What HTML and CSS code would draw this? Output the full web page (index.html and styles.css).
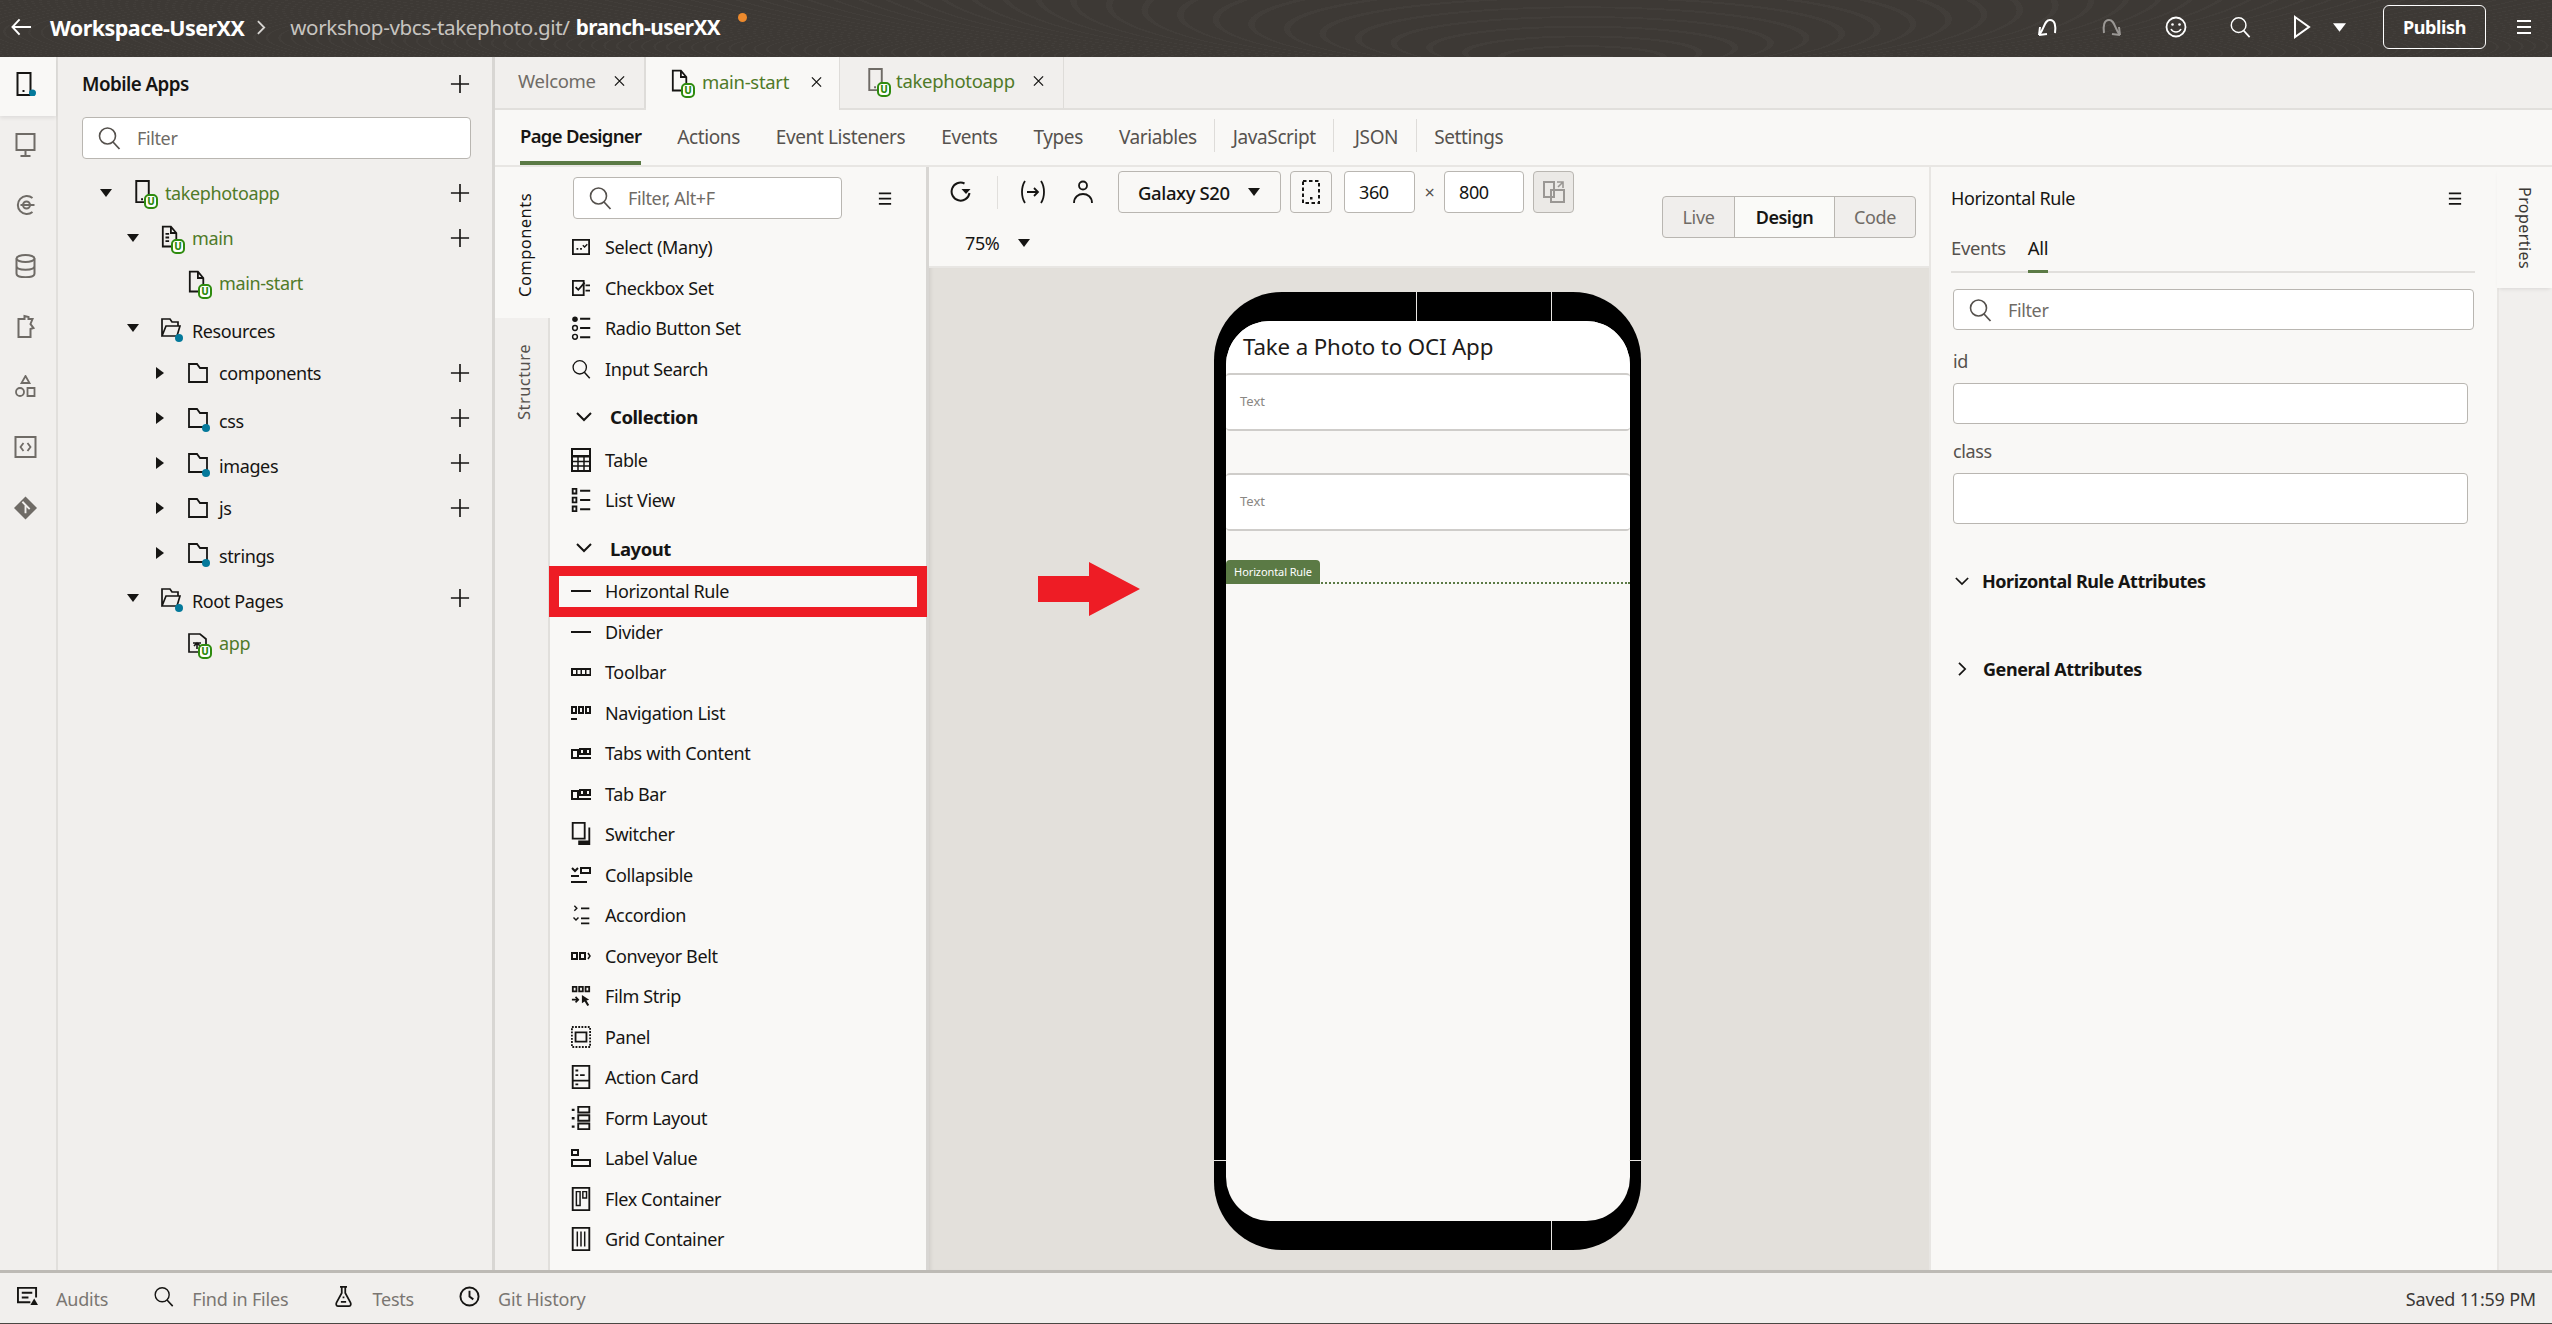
FILE: index.html
```html
<!DOCTYPE html>
<html lang="en">
<head>
<meta charset="utf-8">
<title>Workspace-UserXX</title>
<link rel="stylesheet" href="styles.css">
</head>
<body>
<svg class="defs" width="0" height="0" aria-hidden="true">
  <defs>
    <symbol id="search" viewBox="0 0 24 24"><circle cx="10.5" cy="10" r="8" fill="none" stroke="currentColor" stroke-width="1.6"/><path d="M16 16l6.5 7" fill="none" stroke="currentColor" stroke-width="1.8"/></symbol>
    <symbol id="plus" viewBox="0 0 22 22"><path d="M11 1v20M1 11h20" stroke="currentColor" stroke-width="1.8" fill="none"/></symbol>
    <symbol id="menu" viewBox="0 0 16 16"><path d="M1 2h14M1 8h14M1 14h14" stroke="currentColor" stroke-width="2" fill="none"/></symbol>
    <symbol id="down" viewBox="0 0 12 8"><path d="M0 0h12L6 8z" fill="currentColor"/></symbol>
    <symbol id="right" viewBox="0 0 8 12"><path d="M0 0v12l8-6z" fill="currentColor"/></symbol>
    <symbol id="chev" viewBox="0 0 16 10"><path d="M1 1l7 7 7-7" stroke="currentColor" stroke-width="2" fill="none"/></symbol>
    <symbol id="chevr" viewBox="0 0 10 16"><path d="M1 1l7 7-7 7" stroke="currentColor" stroke-width="2" fill="none"/></symbol>
    <symbol id="close" viewBox="0 0 12 12"><path d="M1 1l10 10M11 1L1 11" stroke="currentColor" stroke-width="1.4" fill="none"/></symbol>
    <symbol id="mobile" viewBox="0 0 18 26"><path d="M2 1h13v22H2z" fill="none" stroke="currentColor" stroke-width="2"/><path d="M7 19h2v2H7z" fill="currentColor"/></symbol>
    <symbol id="page" viewBox="0 0 20 26"><path d="M2 1h9l6 7v15H2z M11 1v7h6" fill="none" stroke="currentColor" stroke-width="2"/></symbol>
    <symbol id="flow" viewBox="0 0 20 26"><path d="M2 1h9l6 7v15H2z M11 1v7h6" fill="none" stroke="currentColor" stroke-width="2"/><path d="M5 9h4M5 13h4M5 17h4" stroke="currentColor" stroke-width="2"/></symbol>
    <symbol id="rootpage" viewBox="0 0 20 20"><path d="M1 1h11l6 5v13H1z" fill="none" stroke="currentColor" stroke-width="1.7"/><path d="M5 10h8M9 16v-5m-3 2l3-3 3 3" stroke="currentColor" stroke-width="1.6" fill="none"/></symbol>
    <symbol id="folder" viewBox="0 0 20 20"><path d="M1 1h8l3 4h7v14H1z" fill="none" stroke="currentColor" stroke-width="1.8"/></symbol>
    <symbol id="folderopen" viewBox="0 0 20 20"><path d="M1 18V1h8l2 3h6v4M1 18l4-10h14l-3 10z" fill="none" stroke="currentColor" stroke-width="1.7"/></symbol>
    <symbol id="select" viewBox="0 0 20 20"><path d="M1 2h18v16H1z" fill="none" stroke="currentColor" stroke-width="2"/><path d="M5 11h2v2H5zM9 11h2v2H9z" fill="currentColor"/><path d="M12 8l2 2 3-3" fill="none" stroke="currentColor" stroke-width="1.5"/></symbol>
    <symbol id="checkset" viewBox="0 0 20 20"><path d="M1 2h12v16H1z" fill="none" stroke="currentColor" stroke-width="2"/><path d="M4 9l3 3 7-8" fill="none" stroke="currentColor" stroke-width="2"/><path d="M15 7h5M15 13h5" stroke="currentColor" stroke-width="2"/></symbol>
    <symbol id="radio" viewBox="0 0 20 26"><circle cx="3.5" cy="3.5" r="3" fill="currentColor"/><circle cx="3.5" cy="13" r="2.6" fill="none" stroke="currentColor" stroke-width="1.6"/><circle cx="3.5" cy="22.5" r="2.6" fill="none" stroke="currentColor" stroke-width="1.6"/><path d="M9 3h11M9 13h11M9 23h11" stroke="currentColor" stroke-width="2"/></symbol>
    <symbol id="table" viewBox="0 0 20 24"><path d="M1 1h18v22H1z" fill="none" stroke="currentColor" stroke-width="2"/><path d="M0 7h20v2.500H0z" fill="currentColor"/><path d="M1 13.500h18M1 18h18M7 8v15M13 8v15" stroke="currentColor" stroke-width="1.500" fill="none"/></symbol>
    <symbol id="list" viewBox="0 0 20 26"><path d="M1 1h4v5H1zM1 10.500h4v5H1zM1 20h4v5H1z" fill="none" stroke="currentColor" stroke-width="2"/><path d="M9 3h11M9 13h11M9 23h11" stroke="currentColor" stroke-width="2"/></symbol>
    <symbol id="hr" viewBox="0 0 20 4"><path d="M0 2h20" stroke="currentColor" stroke-width="2"/></symbol>
    <symbol id="toolbar" viewBox="0 0 20 8"><path d="M0 0h20v8H0z" fill="currentColor"/><path d="M2 2h3v4H2zM6.500 2h3v4h-3zM11 2h3v4h-3zM15.500 2h3v4h-3z" fill="#faf9f7"/></symbol>
    <symbol id="nav" viewBox="0 0 20 14"><path d="M1 1h4v6H1zM8 1h4v6H8zM15 1h4v6h-4z" fill="none" stroke="currentColor" stroke-width="2"/><path d="M0 13h6" stroke="currentColor" stroke-width="2"/></symbol>
    <symbol id="tabs" viewBox="0 0 20 12"><path d="M1 3h6v8H1zM0 11h20" fill="none" stroke="currentColor" stroke-width="2"/><path d="M9 2h4v5H9zM15 2h4v5h-4z" fill="none" stroke="currentColor" stroke-width="2"/></symbol>
    <symbol id="switcher" viewBox="0 0 20 26"><path d="M1 1h13v17H1z" fill="none" stroke="currentColor" stroke-width="2"/><path d="M18 6v14H7v5h13V6z" fill="currentColor"/></symbol>
    <symbol id="collapsible" viewBox="0 0 20 18"><path d="M1 2l3 3 3-3" fill="none" stroke="currentColor" stroke-width="2"/><path d="M10 2h9v5h-9zM0 10h8M0 16h16" fill="none" stroke="currentColor" stroke-width="2"/></symbol>
    <symbol id="accordion" viewBox="0 0 20 24"><path d="M2 1l3 3-3 3M1 15l3 3 3-3" fill="none" stroke="currentColor" stroke-width="1.700"/><path d="M10 4h10M10 16h10M10 22h10" stroke="currentColor" stroke-width="2"/></symbol>
    <symbol id="conveyor" viewBox="0 0 20 8"><path d="M1 1h5v6H1zM9 1h5v6H9z" fill="none" stroke="currentColor" stroke-width="2"/><path d="M17 1l2 3-2 3" fill="none" stroke="currentColor" stroke-width="1.500"/></symbol>
    <symbol id="film" viewBox="0 0 20 22"><path d="M1 1h4v5H1zM8 1h4v5H8zM15 1h4v5h-4z" fill="none" stroke="currentColor" stroke-width="2"/><path d="M0 15h7m-3-3l3 3-3 3" fill="none" stroke="currentColor" stroke-width="1.800"/><path d="M11 10l8 5-3 1 3 5-2 1-3-5-3 2z" fill="currentColor"/></symbol>
    <symbol id="panel" viewBox="0 0 22 24"><path d="M1 1h20v22H1z" fill="none" stroke="currentColor" stroke-width="2" stroke-dasharray="2 1.500"/><path d="M5 7h12v10H5z" fill="none" stroke="currentColor" stroke-width="2"/></symbol>
    <symbol id="card" viewBox="0 0 20 26"><path d="M1 1h18v24H1zM1 17h18" fill="none" stroke="currentColor" stroke-width="2"/><path d="M4 5h3v2H4zM4 10h3v2H4zM9 10h5v2H9zM4 20h3v2H4z" fill="currentColor"/></symbol>
    <symbol id="form" viewBox="0 0 20 26"><path d="M7 1h12v6H7zM7 10h12v6H7zM7 19h12v6H7z" fill="none" stroke="currentColor" stroke-width="2"/><path d="M0 3h3v2.500H0zM0 12h3v2.500H0zM0 21h3v2.500H0z" fill="currentColor"/></symbol>
    <symbol id="labelvalue" viewBox="0 0 20 18"><path d="M1 1h6v5H1zM1 11h18v6H1z" fill="none" stroke="currentColor" stroke-width="2"/></symbol>
    <symbol id="flex" viewBox="0 0 20 26"><path d="M1 1h18v24H1z" fill="none" stroke="currentColor" stroke-width="2"/><path d="M5 5h4v15H5zM12 5h4v7h-4z" fill="none" stroke="currentColor" stroke-width="1.600"/></symbol>
    <symbol id="grid" viewBox="0 0 20 26"><path d="M1 1h18v24H1z" fill="none" stroke="currentColor" stroke-width="2"/><path d="M6 5v16M10 5v16M14 5v16" stroke="currentColor" stroke-width="1.600"/></symbol>
  </defs>
</svg>

<div class="app">
  <header class="top">
    <svg class="back" viewBox="0 0 22 18"><path d="M21 9H2m7-8L1.500 9 9 17" fill="none" stroke="currentColor" stroke-width="2"/></svg>
    <span class="ws">Workspace-UserXX</span>
    <svg class="crumb" viewBox="0 0 10 16"><path d="M1 1l7 7-7 7" fill="none" stroke="currentColor" stroke-width="2"/></svg>
    <span class="repo">workshop-vbcs-takephoto.git/</span>
    <span class="branch">branch-userXX</span>
    <span class="orange"></span>
    <div class="top-actions">
      <svg class="ti undo" viewBox="0 0 22 22"><path d="M3 19l1-8m-1 8l8-1M3 19C9 12 8 4 14 4c5 0 6 6 5 13" fill="none" stroke="currentColor" stroke-width="2"/></svg>
      <svg class="ti redo" viewBox="0 0 22 22"><path d="M19 19l-1-8m1 8l-8-1m8 1C13 12 14 4 8 4 3 4 2 10 3 17" fill="none" stroke="currentColor" stroke-width="2"/></svg>
      <svg class="ti smile" viewBox="0 0 22 22"><circle cx="11" cy="11" r="9.500" fill="none" stroke="currentColor" stroke-width="1.800"/><circle cx="7.500" cy="8.500" r="1.300" fill="currentColor"/><circle cx="14.500" cy="8.500" r="1.300" fill="currentColor"/><path d="M6 13c2 4 8 4 10 0" fill="none" stroke="currentColor" stroke-width="1.600"/></svg>
      <svg class="ti find"><use href="#search"/></svg>
      <svg class="ti play" viewBox="0 0 20 24"><path d="M3 2l14 10L3 22z" fill="none" stroke="currentColor" stroke-width="2"/></svg>
      <svg class="play-down"><use href="#down"/></svg>
      <button class="publish">Publish</button>
      <svg class="top-menu"><use href="#menu"/></svg>
    </div>
  </header>

  <div class="main">
    <nav class="rail">
      <div class="rail-item active"><svg class="ri" viewBox="0 0 22 24"><path d="M3 1h13v22H3z" fill="none" stroke="currentColor" stroke-width="2"/><path d="M8 18h2v2H8z" fill="currentColor"/><circle cx="18" cy="21" r="3.500" fill="#04799b"/></svg></div>
      <div class="rail-item"><svg class="ri grey" viewBox="0 0 22 24"><path d="M2 1h18v16H2zM11 17v5M6 23h10" fill="none" stroke="currentColor" stroke-width="2"/></svg></div>
      <div class="rail-item"><svg class="ri grey" viewBox="0 0 22 24"><path d="M18 5a9 9 0 1 0 0 14" fill="none" stroke="currentColor" stroke-width="2"/><circle cx="12" cy="12" r="3.500" fill="none" stroke="currentColor" stroke-width="2"/><path d="M6 12h14" stroke="currentColor" stroke-width="2"/></svg></div>
      <div class="rail-item"><svg class="ri grey" viewBox="0 0 22 24"><ellipse cx="11" cy="4.500" rx="9" ry="3.500" fill="none" stroke="currentColor" stroke-width="2"/><path d="M2 4.500v15c0 5 18 5 18 0v-15M2 12c0 5 18 5 18 0" fill="none" stroke="currentColor" stroke-width="2"/></svg></div>
      <div class="rail-item"><svg class="ri grey" viewBox="0 0 22 24"><path d="M4 5h6V2l4 1v2h4l-2 5 3 4-3 1v8H4z" fill="none" stroke="currentColor" stroke-width="2"/></svg></div>
      <div class="rail-item"><svg class="ri grey" viewBox="0 0 22 24"><path d="M11 1l4 7H7z" fill="none" stroke="currentColor" stroke-width="1.800"/><circle cx="5.500" cy="17" r="4" fill="none" stroke="currentColor" stroke-width="1.800"/><path d="M13 13h7v8h-7z" fill="none" stroke="currentColor" stroke-width="1.800"/></svg></div>
      <div class="rail-item"><svg class="ri grey" viewBox="0 0 22 24"><path d="M1 2h20v20H1z" fill="none" stroke="currentColor" stroke-width="2"/><path d="M9 8l-3 4 3 4M13 8l3 4-3 4" fill="none" stroke="currentColor" stroke-width="1.800"/></svg></div>
      <div class="rail-item"><svg class="ri grey" viewBox="0 0 22 22"><path d="M11 0l11 11-11 11L0 11z" fill="currentColor"/><path d="M8 5l7 7M11 8v8" stroke="#f1efed" stroke-width="1.800" fill="none"/></svg></div>
    </nav>

    <aside class="tree">
      <div class="tree-head"><span class="tree-title">Mobile Apps</span><svg class="add"><use href="#plus"/></svg></div>
      <label class="field tree-filter"><svg class="mag"><use href="#search"/></svg><span class="ph">Filter</span></label>
      <ul class="nodes">
        <li class="node l1"><svg class="tw"><use href="#down"/></svg><span class="ic"><svg class="ic-m"><use href="#mobile"/></svg><b class="u">U</b></span><span class="lbl green">takephotoapp</span><svg class="add"><use href="#plus"/></svg></li>
        <li class="node l2"><svg class="tw"><use href="#down"/></svg><span class="ic"><svg class="ic-m"><use href="#flow"/></svg><b class="u">U</b></span><span class="lbl green">main</span><svg class="add"><use href="#plus"/></svg></li>
        <li class="node l3 notw"><span class="ic"><svg class="ic-m"><use href="#page"/></svg><b class="u">U</b></span><span class="lbl green">main-start</span></li>
        <li class="node l2 low"><svg class="tw"><use href="#down"/></svg><span class="ic"><svg class="ic-f"><use href="#folderopen"/></svg><i class="dot"></i></span><span class="lbl">Resources</span></li>
        <li class="node l3"><svg class="tw tr"><use href="#right"/></svg><span class="ic"><svg class="ic-f"><use href="#folder"/></svg></span><span class="lbl">components</span><svg class="add"><use href="#plus"/></svg></li>
        <li class="node l3 low"><svg class="tw tr"><use href="#right"/></svg><span class="ic"><svg class="ic-f"><use href="#folder"/></svg><i class="dot"></i></span><span class="lbl">css</span><svg class="add"><use href="#plus"/></svg></li>
        <li class="node l3 low"><svg class="tw tr"><use href="#right"/></svg><span class="ic"><svg class="ic-f"><use href="#folder"/></svg><i class="dot"></i></span><span class="lbl">images</span><svg class="add"><use href="#plus"/></svg></li>
        <li class="node l3"><svg class="tw tr"><use href="#right"/></svg><span class="ic"><svg class="ic-f"><use href="#folder"/></svg></span><span class="lbl">js</span><svg class="add"><use href="#plus"/></svg></li>
        <li class="node l3 low"><svg class="tw tr"><use href="#right"/></svg><span class="ic"><svg class="ic-f"><use href="#folder"/></svg><i class="dot"></i></span><span class="lbl">strings</span></li>
        <li class="node l2 low"><svg class="tw"><use href="#down"/></svg><span class="ic"><svg class="ic-f"><use href="#folderopen"/></svg><i class="dot"></i></span><span class="lbl">Root Pages</span><svg class="add"><use href="#plus"/></svg></li>
        <li class="node l3 notw"><span class="ic"><svg class="ic-f"><use href="#rootpage"/></svg><b class="u">U</b></span><span class="lbl green">app</span></li>
      </ul>
    </aside>

    <section class="work">
      <div class="tabs">
        <div class="tab t-welcome"><span class="tab-txt">Welcome</span><svg class="x"><use href="#close"/></svg></div>
        <div class="tab t-main on"><span class="ic tab-ic"><svg class="ic-m"><use href="#page"/></svg><b class="u">U</b></span><span class="tab-txt green">main-start</span><svg class="x"><use href="#close"/></svg></div>
        <div class="tab t-app"><span class="ic tab-ic"><svg class="ic-m grey"><use href="#mobile"/></svg><b class="u">U</b></span><span class="tab-txt green">takephotoapp</span><svg class="x"><use href="#close"/></svg></div>
      </div>

      <div class="subtabs">
        <span class="st on">Page Designer</span><span class="st">Actions</span><span class="st">Event Listeners</span><span class="st">Events</span><span class="st">Types</span><span class="st sep">Variables</span><span class="st sep">JavaScript</span><span class="st st-json">JSON</span><span class="st sep-l">Settings</span>
      </div>

      <div class="designer">
        <div class="vtabs">
          <div class="vt on"><span class="vt-txt">Components</span></div>
          <div class="vt"><span class="vt-txt muted">Structure</span></div>
        </div>

        <div class="palette">
          <div class="pal-top">
            <label class="field pal-filter"><svg class="mag"><use href="#search"/></svg><span class="ph">Filter, Alt+F</span></label>
            <svg class="menu-ic"><use href="#menu"/></svg>
          </div>
          <ul class="items">
            <li class="it"><svg class="pi h18"><use href="#select"/></svg>Select (Many)</li>
            <li class="it"><svg class="pi h18"><use href="#checkset"/></svg>Checkbox Set</li>
            <li class="it"><svg class="pi h24"><use href="#radio"/></svg>Radio Button Set</li>
            <li class="it"><svg class="pi h24 sq"><use href="#search"/></svg>Input Search</li>
            <li class="grp"><svg class="gc"><use href="#chev"/></svg>Collection</li>
            <li class="it"><svg class="pi h24"><use href="#table"/></svg>Table</li>
            <li class="it"><svg class="pi h24"><use href="#list"/></svg>List View</li>
            <li class="grp"><svg class="gc"><use href="#chev"/></svg>Layout</li>
            <li class="it hl"><svg class="pi h4"><use href="#hr"/></svg>Horizontal Rule</li>
            <li class="it"><svg class="pi h4"><use href="#hr"/></svg>Divider</li>
            <li class="it"><svg class="pi h8"><use href="#toolbar"/></svg>Toolbar</li>
            <li class="it"><svg class="pi h14"><use href="#nav"/></svg>Navigation List</li>
            <li class="it"><svg class="pi h12"><use href="#tabs"/></svg>Tabs with Content</li>
            <li class="it"><svg class="pi h12"><use href="#tabs"/></svg>Tab Bar</li>
            <li class="it"><svg class="pi h24"><use href="#switcher"/></svg>Switcher</li>
            <li class="it"><svg class="pi h18"><use href="#collapsible"/></svg>Collapsible</li>
            <li class="it"><svg class="pi h20"><use href="#accordion"/></svg>Accordion</li>
            <li class="it"><svg class="pi h8"><use href="#conveyor"/></svg>Conveyor Belt</li>
            <li class="it"><svg class="pi h20"><use href="#film"/></svg>Film Strip</li>
            <li class="it"><svg class="pi h24"><use href="#panel"/></svg>Panel</li>
            <li class="it"><svg class="pi h24"><use href="#card"/></svg>Action Card</li>
            <li class="it"><svg class="pi h24"><use href="#form"/></svg>Form Layout</li>
            <li class="it"><svg class="pi h18"><use href="#labelvalue"/></svg>Label Value</li>
            <li class="it"><svg class="pi h24"><use href="#flex"/></svg>Flex Container</li>
            <li class="it"><svg class="pi h24"><use href="#grid"/></svg>Grid Container</li>
          </ul>
        </div>

        <div class="stage">
          <div class="stagebar">
            <div class="stage-left">
              <div class="tools">
                <svg class="tool t-refresh" viewBox="0 0 22 24"><path d="M14 3.500A9 9 0 1 0 19 13" fill="none" stroke="currentColor" stroke-width="2"/><path d="M14 9h9l-4.500 5z" fill="currentColor" transform="translate(-3 0)"/></svg>
                <span class="vsep"></span>
                <svg class="tool t-var" viewBox="0 0 26 24"><path d="M5 1C1 7 1 17 5 23M21 1c4 6 4 16 0 22" fill="none" stroke="currentColor" stroke-width="1.800"/><path d="M7 12h11m-4-4l4 4-4 4" fill="none" stroke="currentColor" stroke-width="1.800"/></svg>
                <svg class="tool t-user" viewBox="0 0 22 24"><circle cx="11" cy="5.500" r="4" fill="none" stroke="currentColor" stroke-width="1.800"/><path d="M2 23c0-12 18-12 18 0" fill="none" stroke="currentColor" stroke-width="1.800"/></svg>
                <div class="box device"><span>Galaxy S20</span><svg class="dd"><use href="#down"/></svg></div>
                <div class="box orient"><svg class="orient-ic" viewBox="0 0 18 24"><path d="M1 1h16v22H1z" fill="none" stroke="currentColor" stroke-width="2" stroke-dasharray="3.500 2.500"/><path d="M8 17h2.500v2.500H8z" fill="currentColor"/></svg></div>
                <div class="box dim d1">360</div>
                <span class="times">×</span>
                <div class="box dim d2">800</div>
                <div class="box swap"><svg class="swap-ic" viewBox="0 0 24 24"><path d="M2 2h10v15H2zM9 10h13v12H9z" fill="none" stroke="currentColor" stroke-width="2"/><path d="M15 2h6v6m0-6l-5 5" fill="none" stroke="currentColor" stroke-width="1.600"/></svg></div>
              </div>
              <div class="zoomrow"><span>75%</span><svg class="dd"><use href="#down"/></svg></div>
            </div>
            <div class="seg"><span class="sg s-live">Live</span><span class="sg s-design on">Design</span><span class="sg s-code">Code</span></div>
          </div>

          <div class="canvas">
            <div class="phone">
              <i class="seam sv1"></i><i class="seam sv2"></i><i class="seam sv3"></i><i class="seam sh1"></i><i class="seam sh2"></i>
              <div class="screen">
                <div class="app-title">Take a Photo to OCI App</div>
                <div class="txt">Text</div>
                <div class="txt gap">Text</div>
                <div class="rule"><span class="rule-tag">Horizontal Rule</span></div>
              </div>
            </div>
            <svg class="arrow" viewBox="0 0 102 54"><path d="M0 14h51V0l51 27-51 27V40H0z" fill="#ee1c25"/></svg>
          </div>
        </div>

        <div class="props">
          <div class="props-body">
            <div class="props-head"><span>Horizontal Rule</span><svg class="menu-ic"><use href="#menu"/></svg></div>
            <div class="props-tabs"><span class="pt">Events</span><span class="pt on">All</span></div>
            <label class="field props-filter"><svg class="mag"><use href="#search"/></svg><span class="ph">Filter</span></label>
            <div class="flabel">id</div>
            <div class="field finput"></div>
            <div class="flabel f2">class</div>
            <div class="field finput tall"></div>
            <div class="sect"><svg class="gc"><use href="#chev"/></svg>Horizontal Rule Attributes</div>
            <div class="sect s2"><svg class="gcr"><use href="#chevr"/></svg>General Attributes</div>
          </div>
          <div class="props-rail"><div class="prop-tab"><span class="prop-txt">Properties</span></div></div>
        </div>
      </div>
    </section>
  </div>

  <footer class="status">
    <svg class="si s-audit" viewBox="0 0 22 20"><path d="M14 16H1V1h19v10" fill="none" stroke="currentColor" stroke-width="2"/><path d="M5 6h11M5 11h7" stroke="currentColor" stroke-width="2"/><path d="M18 12l4 7h-8z" fill="currentColor"/></svg>
    <span class="stxt">Audits</span>
    <svg class="si s-find"><use href="#search"/></svg>
    <span class="stxt">Find in Files</span>
    <svg class="si s-test" viewBox="0 0 20 24"><path d="M6 1h8M8 1v7L2 19c-1 2 0 4 2 4h12c2 0 3-2 2-4L12 8V1" fill="none" stroke="currentColor" stroke-width="2"/><path d="M9 12h2v2H9zM7 17h6v2H7z" fill="currentColor"/></svg>
    <span class="stxt">Tests</span>
    <svg class="si s-git" viewBox="0 0 22 22"><circle cx="11" cy="11" r="9.500" fill="none" stroke="currentColor" stroke-width="2"/><path d="M11 5v6l4 3" fill="none" stroke="currentColor" stroke-width="2"/></svg>
    <span class="stxt">Git History</span>
    <span class="saved">Saved 11:59 PM</span>
  </footer>
</div>
</body>
</html>
```

FILE: styles.css
```css
* { box-sizing: border-box; }
html, body { margin: 0; height: 100%; overflow: hidden; }
body { font-family: "Noto Sans", "Open Sans", sans-serif; font-size: 18px; color: #161513; background: #f9f8f6; letter-spacing: -0.38px; }
ul { list-style: none; margin: 0; padding: 0; }
svg { display: block; flex: none; }
.defs { position: absolute; }
.app { display: flex; flex-direction: column; height: 1324px; width: 2552px; }
.green { color: #4f7a28; }
.grey { color: #6f6b66; }

/* header */
.top { flex: 0 0 57px; display: flex; align-items: center; color: #fff; padding: 0 0 3px 11px;
  background-color: #3d3935;
  background-image: repeating-radial-gradient(ellipse at 62% 120%, rgba(255,255,255,.022) 0 2px, transparent 2px 11px); }
.back { width: 21px; height: 18px; margin-right: 18px; }
.ws { font-weight: 700; font-size: 21.500px; letter-spacing: -0.55px; }
.crumb { width: 9px; height: 15px; margin: 0 24px 0 13px; color: #d8d6d3; }
.repo { font-size: 20.600px; color: #c7c4c0; letter-spacing: -0.38px; margin-right: 6px; }
.branch { font-size: 20.700px; font-weight: 700; letter-spacing: -0.55px; }
.orange { width: 9px; height: 9px; border-radius: 50%; background: #ed8a2d; margin: -19px 0 0 18px; }
.top-actions { margin-left: auto; display: flex; align-items: center; }
.ti { width: 22px; height: 24px; }
.undo { margin-right: 43px; }
.redo { margin-right: 42px; color: #9a9794; }
.smile { margin-right: 42px; }
.find { margin-right: 41px; }
.play { width: 20px; margin-right: 21px; }
.play-down { width: 13px; height: 9px; margin-right: 37px; color: #fff; }
.publish { width: 103px; height: 44px; border: 1px solid #fff; border-radius: 6px; background: transparent; color: #fff; font: 700 18px "Noto Sans", sans-serif; letter-spacing: -0.4px; padding: 0; }
.top-menu { width: 16px; height: 16px; margin: 0 20px 0 30px; color: #fff; }

/* layout */
.main { flex: 1; display: flex; min-height: 0; }
.rail { flex: 0 0 58px; background: #f1efed; border-right: 2px solid #e1dfdc; }
.rail-item { height: 60.5px; display: flex; justify-content: center; padding-top: 15px; padding-right: 6px; }
.rail-item.active { height: 59px; background: #f9f8f6; box-shadow: 0 2px 4px rgba(0,0,0,.08); margin-bottom: 1.5px; }
.ri { width: 23px; height: 24px; }

/* tree */
.tree { flex: 0 0 436px; background: #f1efed; border-right: 3px solid #d8d6d3; padding: 0 21px 0 24px; position: relative; }
.tree-head { height: 60px; padding-bottom: 6px; display: flex; align-items: center; justify-content: space-between; }
.tree-title { font-weight: 600; font-size: 18.800px; letter-spacing: -0.55px; }
.add { width: 20px; height: 20px; margin-left: auto; margin-right: 1px; }
.field { display: flex; align-items: center; background: #fff; border: 1px solid #b9b6b1; border-radius: 4px; }
.mag { width: 24px; height: 24px; color: #55514d; }
.ph { color: #6f6b66; }
.tree-filter { height: 42px; width: 389px; padding-left: 14px; gap: 16px; }
.nodes { margin-top: 11px; }
.node { height: 45px; display: flex; align-items: center; }
.tw { width: 12px; height: 8px; margin-right: 22px; }
.tw.tr { width: 8px; height: 12px; margin-right: 24px; }
.l1 { padding-left: 18px; }
.l2 { padding-left: 45px; }
.l3 { padding-left: 74px; }
.l3.notw { padding-left: 106px; }
.ic { position: relative; width: 32px; height: 28px; display: flex; align-items: center; flex: none; }
.ic-m { width: 18px; height: 25px; }
.ic-f { width: 20px; height: 20px; }
.u { position: absolute; left: 10px; bottom: -2px; width: 14px; height: 15px; border-radius: 5px; background: #fff; border: 2.500px solid #2e8b0e; color: #2e8b0e; font: 800 10px/10px "Noto Sans", sans-serif; letter-spacing: 0; text-align: center; }
.dot { position: absolute; left: 14px; bottom: 0; width: 8px; height: 8px; border-radius: 50%; background: #04799b; }
.lbl { margin-left: -1px; }
.low .lbl { padding-top: 6px; }

/* work */
.work { flex: 1; display: flex; flex-direction: column; min-width: 0; }
.tabs { flex: 0 0 53px; min-height: 0; display: flex; background: #f1efed; border-bottom: 2px solid #e1dfdc; }
.tab { display: flex; align-items: center; height: 51px; padding-bottom: 4px; }
.tab-txt { color: #6f6b66; font-size: 18.500px; letter-spacing: -0.3px; }
.x { width: 11px; height: 12px; color: #161513; }
.t-welcome { width: 151px; padding-left: 23px; border-right: 2px solid #dedcd9; }
.t-welcome .x { margin-left: 18px; }
.t-main { width: 194px; padding-left: 25px; background: #f9f8f6; height: 53px; border-right: 1px solid #dedcd9; }
.tab-txt.green { color: #4f7a28; }
.t-main .x { margin-left: 22px; }
.t-app { width: 224px; padding-left: 27px; border-right: 1px solid #dedcd9; }
.t-app .tab-ic { width: 29px; }
.t-app .x { margin-left: 18px; }
.tab-ic { width: 31px; }

.subtabs { flex: 0 0 57px; min-height: 0; display: flex; align-items: stretch; padding-left: 25px; border-bottom: 2px solid #e8e6e3; gap: 36px; background: #f9f8f6; }
.st { display: flex; align-items: center; color: #56524e; padding-bottom: 2px; position: relative; font-size: 19px; letter-spacing: -0.4px; }
.st.on { color: #161513; font-weight: 600; font-size: 18.500px; border-bottom: 4px solid #5b7a45; padding-bottom: 0; height: 55px; letter-spacing: -0.7px; }
.st-json { margin-left: 3px; }
.st.sep::after, .st.sep-l::before { content: ""; position: absolute; top: 9px; height: 33px; width: 1px; background: #dedcd9; }
.st.sep::after { right: -18px; }
.st.sep-l::before { left: -18px; }

.designer { flex: 1; display: flex; min-height: 0; }
.vtabs { flex: 0 0 55px; background: #f1efed; border-right: 2px solid #e1dfdc; }
.vt { height: 151px; display: flex; justify-content: center; padding: 24px 0 0 3px; background: #f1efed; }
.vt:not(.on) { padding-top: 22px; }
.vt.on { background: #f9f8f6; margin-right: -2px; position: relative; }
.vt-txt { writing-mode: vertical-rl; transform: rotate(180deg); font-size: 16.500px; letter-spacing: 0.45px; height: 106px; text-align: left; }
.vt-txt.muted { color: #56524e; height: 80px; }

.palette { flex: 0 0 379px; background: #f9f8f6; border-right: 3px solid #d8d6d3; padding-top: 10px; }
.pal-top { display: flex; align-items: center; padding-left: 23px; }
.pal-filter { width: 269px; height: 42px; padding-left: 14px; gap: 16px; }
.menu-ic { width: 14px; height: 15px; margin-left: 36px; }
.items { margin-top: 8px; }
.it { height: 40.500px; display: flex; align-items: center; padding-left: 21px; }
.pi { width: 20px; margin-right: 14px; }
.h4 { height: 4px; } .h8 { height: 8px; } .h12 { height: 12px; } .h14 { height: 14px; }
.h18 { height: 18px; } .h20 { height: 20px; } .h24 { height: 24px; }
.sq { width: 20px; }
.grp { height: 50.500px; padding: 5px 0 0 26px; display: flex; align-items: center; font-weight: 700; font-size: 18.500px; letter-spacing: -0.45px; }
.gc { width: 16px; height: 10px; margin-right: 18px; }
.hl { position: relative; }
.hl::after { content: ""; position: absolute; left: -1px; right: -1px; top: -5px; bottom: -5px; border: 10px solid #ee1c25; pointer-events: none; }

.stage { flex: 1; display: flex; flex-direction: column; min-width: 0; }
.stagebar { flex: 0 0 101px; display: flex; align-items: center; justify-content: space-between; background: #f9f8f6; border-bottom: 2px solid #e8e6e3; padding-right: 13px; }
.stage-left { height: 99px; padding-top: 4px; }
.tools { display: flex; align-items: center; height: 42px; padding-left: 21px; }
.tool { height: 24px; }
.t-refresh { width: 23px; }
.vsep { width: 1px; height: 33px; background: #e1dfdc; margin: 0 22px 0 24px; }
.t-var { width: 26px; margin-right: 26px; }
.t-user { width: 22px; margin-right: 24px; }
.box { height: 42px; border: 1px solid #b9b6b1; border-radius: 4px; display: flex; align-items: center; background: #fff; flex: none; }
.device { width: 163px; padding: 0 20px 0 19px; font-weight: 500; font-size: 18.500px; justify-content: space-between; background: #f9f8f6; }
.dd { width: 12px; height: 8px; }
.orient { width: 42px; margin-left: 9px; justify-content: center; background: #f9f8f6; }
.orient-ic { width: 18px; height: 24px; }
.dim { padding-left: 14px; }
.d1 { width: 71px; margin-left: 12px; }
.times { width: 29px; text-align: center; color: #56524e; }
.d2 { width: 80px; padding-left: 14px; }
.swap { width: 41px; margin-left: 9px; background: #ebe9e6; justify-content: center; color: #9a9794; }
.swap-ic { width: 24px; height: 24px; }
.zoomrow { display: flex; align-items: center; padding: 18px 0 0 36px; gap: 19px; }
.seg { display: flex; height: 42px; border: 1px solid #b9b6b1; border-radius: 4px; background: #f0eeec; }
.sg { display: flex; align-items: center; justify-content: center; color: #6f6b66; }
.s-live { width: 72px; border-right: 1px solid #b9b6b1; }
.s-design { width: 100px; background: #fafaf8; color: #161513; font-weight: 600; border-right: 1px solid #b9b6b1; letter-spacing: -0.5px; }
.s-code { width: 80px; }

.canvas { flex: 1; background: #e3e0db; position: relative; padding: 24px 0 0 285px; box-shadow: inset 4px 0 4px -3px rgba(0,0,0,.1); }
.phone { width: 427px; height: 958px; background: #000; border-radius: 68px; padding: 29px 11px 29px 12px; position: relative; }
.screen { height: 100%; border-radius: 44px; background: #f9f8f6; overflow: hidden; }
.seam { position: absolute; background: #e9e7e4; }
.sv1, .sv2 { top: 0; width: 1px; height: 29px; }
.sv1 { left: 202px; }
.sv2 { left: 337px; }
.sv3 { left: 337px; bottom: 0; width: 1px; height: 29px; }
.sh1, .sh2 { height: 1px; width: 12px; top: 868px; }
.sh1 { left: 0; }
.sh2 { right: 0; }
.app-title { height: 52px; background: #fff; font-size: 22.300px; letter-spacing: -0.15px; padding: 4px 0 0 17px; line-height: 44px; color: #1d1b19; }
.txt { height: 58px; background: #fff; border: 1px solid #cfcdca; border-width: 2px 0; border-radius: 4px; font-size: 13px; letter-spacing: 0; color: #8a8783; padding: 0 0 0 14px; line-height: 53px; }
.txt.gap { margin-top: 42px; }
.rule { margin-top: 29px; height: 24px; border-bottom: 2px dotted #5b7a45; }
.rule-tag { display: block; width: 94px; height: 24px; background: #5b7a45; color: #fff; font-size: 11px; letter-spacing: -0.1px; line-height: 23px; text-align: center; border-radius: 4px 4px 0 0; }
.arrow { position: absolute; left: 109px; top: 294px; width: 102px; height: 54px; }

.props { flex: 0 0 623px; display: flex; background: #f9f8f6; border-left: 2px solid #e8e6e3; }
.props-body { flex: 0 0 566px; padding: 0 0 0 20px; }
.props-head { height: 62px; display: flex; align-items: center; justify-content: space-between; padding-right: 35px; }
.props-head .menu-ic { margin: 0; }
.props-tabs { display: flex; gap: 22px; height: 44px; border-bottom: 2px solid #e1dfdc; width: 524px; }
.pt { color: #56524e; height: 44px; display: flex; align-items: center; padding-bottom: 8px; font-size: 18.500px; }
.pt.on { color: #161513; border-bottom: 3px solid #5b7a45; padding-bottom: 5px; }
.props-filter { width: 521px; height: 41px; margin: 16px 0 0 2px; padding-left: 14px; gap: 16px; }
.flabel { margin: 19px 0 0 2px; height: 24px; line-height: 24px; color: #56524e; }
.f2 { margin-top: 15px; }
.finput { width: 515px; height: 41px; margin: 10px 0 0 2px; }
.finput.tall { height: 51px; }
.sect { display: flex; align-items: center; font-weight: 700; margin-top: 45px; height: 24px; padding-left: 4px; letter-spacing: -0.45px; }
.sect .gc { width: 14px; height: 9px; margin-right: 13px; }
.gcr { width: 9px; height: 14px; margin-right: 16px; margin-left: 3px; }
.s2 { margin-top: 64px; }
.props-rail { flex: 1; background: #f1efed; border-left: 2px solid #e8e6e3; }
.prop-tab { height: 121px; background: #f9f8f6; margin-left: -2px; display: flex; justify-content: center; padding-top: 20px; box-shadow: 0 3px 4px -2px rgba(0,0,0,.1); }
.prop-txt { writing-mode: vertical-rl; font-size: 16px; letter-spacing: 0.45px; color: #3b3835; }

/* status */
.status { flex: 0 0 54px; display: flex; align-items: center; background: #f1efed; border-top: 3px solid #bdbab5; border-bottom: 1px solid #4a4743; padding: 0 16px 0 17px; }
.si { width: 21px; height: 21px; margin-top: -4px; }
.stxt { color: #7a7672; margin-left: 18px; margin-top: 2px; letter-spacing: -0.2px; }
.s-find { margin-left: 45px; }
.s-test { margin-left: 45px; }
.s-git { margin-left: 45px; }
.saved { margin-left: auto; color: #3b3835; letter-spacing: -0.2px; margin-top: 2px; }
```
